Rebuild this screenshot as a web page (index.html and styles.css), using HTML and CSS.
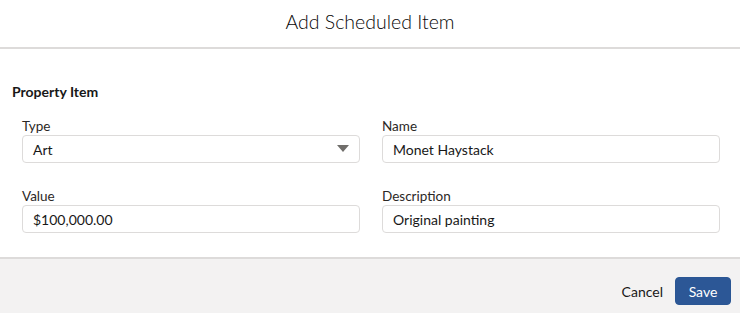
FILE: index.html
```html
<!doctype html>
<html lang="en">
<head>
    <meta charset="UTF-8">
    <meta name="viewport" content="width=device-width, initial-scale=1.0">
    <title>Add Scheduled Item</title>
    <link rel="stylesheet" href="styles.css">
</head>
<body>
<div id="modal">
    <header class="modal-header">
        <h2 class="modal-title">Add Scheduled Item</h2>
    </header>
    <section class="modal-body">
        <h3 class="section-title">Property Item</h3>
        <div class="fields">
            <div class="field">
                <label class="label" for="type">Type</label>
                <div class="select">
                    <span id="type">Art</span>
                    <svg class="arrow" width="12" height="8" viewBox="0 0 12 8"><path d="M0 0 H12 L6 7 Z" fill="#706e6b"/></svg>
                </div>
            </div>
            <div class="field">
                <label class="label" for="name">Name</label>
                <input id="name" class="input" type="text" value="Monet Haystack">
            </div>
            <div class="field">
                <label class="label" for="value">Value</label>
                <input id="value" class="input" type="text" value="$100,000.00">
            </div>
            <div class="field">
                <label class="label" for="description">Description</label>
                <input id="description" class="input" type="text" value="Original painting">
            </div>
        </div>
    </section>
    <footer class="modal-footer">
        <button class="btn btn-neutral">Cancel</button>
        <button class="btn btn-brand">Save</button>
    </footer>
</div>
</body>
</html>
```

FILE: styles.css
```css
body {
    margin: 0;
    font-family: Lato, "Open Sans", sans-serif;
    color: #181818;
    background: #fff;
}

#modal {
    width: 740px;
}

.modal-header {
    height: 47px;
    display: flex;
    align-items: center;
    justify-content: center;
    border-bottom: 2px solid #dddbda;
}

.modal-title {
    margin: -3px 0 0;
    font-size: 19.5px;
    font-weight: 300;
    line-height: 24px;
    color: #080707;
}

.modal-body {
    padding: 33px 20px 24px 12px;
}

.section-title {
    margin: 0 0 16px;
    font-size: 14px;
    font-weight: 700;
    line-height: 20px;
}

.fields {
    display: grid;
    grid-template-columns: 1fr 1fr;
    column-gap: 22px;
    row-gap: 25px;
    padding-left: 10px;
}

.field {
    display: flex;
    flex-direction: column;
}

.label {
    font-size: 13.5px;
    line-height: 17px;
    color: #2b2826;
}

.input,
.select {
    box-sizing: border-box;
    height: 28px;
    padding: 0 10px;
    border: 1px solid #dddbda;
    border-radius: 4px;
    font-family: inherit;
    font-size: 14px;
    color: #181818;
    background: #fff;
}

.select {
    display: flex;
    align-items: center;
    justify-content: space-between;
}

.modal-footer {
    display: flex;
    justify-content: flex-end;
    align-items: flex-start;
    gap: 2px;
    height: 56px;
    box-sizing: border-box;
    padding: 18px 9px 10px;
    border-top: 2px solid #dddbda;
    background: #f3f2f2;
}

.btn {
    height: 28px;
    padding: 0 12px;
    border-radius: 4px;
    font-family: inherit;
    font-size: 14px;
    cursor: pointer;
}

.btn-neutral {
    padding: 0 10px;
    border: none;
    background: transparent;
    color: #181818;
}

.btn-brand {
    width: 56px;
    border: 1px solid #2a5694;
    background: #2c5796;
    color: #fff;
}
```
